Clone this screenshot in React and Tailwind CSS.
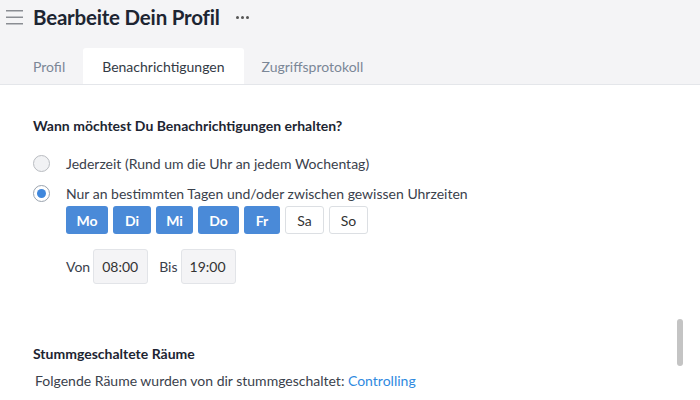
import React from "react";

const days = [
  { l: "Mo", on: true, w: "w-[42px]" },
  { l: "Di", on: true, w: "w-[38px]" },
  { l: "Mi", on: true, w: "w-[37px]" },
  { l: "Do", on: true, w: "w-[41px]" },
  { l: "Fr", on: true, w: "w-[36px]" },
  { l: "Sa", on: false, w: "w-[39px]" },
  { l: "So", on: false, w: "w-[39px]" },
];

export default function App() {
  return (
    <div className="w-[700px] h-[400px] overflow-hidden bg-white font-['Lato',sans-serif] text-[#2b3340] relative">
      <div className="bg-[#f4f4f6] border-b border-[#e4e6ea]">
        <div className="flex items-center h-[34px] pl-[6px]">
          <svg width="17" height="16" viewBox="0 0 17 16" className="mr-[10px]">
            <rect x="0" y="1" width="17" height="1.5" fill="#8a8d93" />
            <rect x="0" y="7.5" width="17" height="1.5" fill="#8a8d93" />
            <rect x="0" y="14" width="17" height="1.5" fill="#8a8d93" />
          </svg>
          <h1 className="text-[20.5px] font-bold text-[#1d2532] tracking-[-0.2px]">Bearbeite Dein Profil</h1>
          <span className="ml-[16px] flex gap-[2px] items-center mt-[1px]">
            <span className="w-[3px] h-[3px] rounded-full bg-[#555]" />
            <span className="w-[3px] h-[3px] rounded-full bg-[#555]" />
            <span className="w-[3px] h-[3px] rounded-full bg-[#555]" />
          </span>
        </div>
        <div className="flex pl-[15px] mt-[14px] h-[36px] text-[14px]">
          <div className="px-[18px] flex items-center text-[#7b8797]">Profil</div>
          <div className="px-[19px] flex items-center bg-white rounded-t-[3px] text-[#333a45]">Benachrichtigungen</div>
          <div className="px-[18px] flex items-center text-[#7b8797]">Zugriffsprotokoll</div>
        </div>
      </div>

      <div className="pl-[33px] pt-[30px] text-[14px]">
        <h2 className="font-bold text-[14px] text-[#1d2532]">Wann möchtest Du Benachrichtigungen erhalten?</h2>
        <div className="mt-[17px] flex items-center h-[20px]">
          <span className="w-[17px] h-[17px] rounded-full border border-[#b9bcc1] bg-[#f1f2f4]" />
          <span className="ml-[16px] text-[#3a414c]">Jederzeit (Rund um die Uhr an jedem Wochentag)</span>
        </div>
        <div className="mt-[10px] flex items-center h-[20px]">
          <span className="w-[17px] h-[17px] rounded-full border border-[#9aa3ae] bg-white flex items-center justify-center">
            <span className="w-[9px] h-[9px] rounded-full bg-[#3f87dc]" />
          </span>
          <span className="ml-[16px] text-[#3a414c]">Nur an bestimmten Tagen und/oder zwischen gewissen Uhrzeiten</span>
        </div>
        <div className="ml-[33px] mt-[3px] flex gap-[5px]">
          {days.map((d) => (
            <div
              key={d.l}
              className={`${d.w} h-[28px] flex items-center justify-center rounded-[3px] text-[14px] ${
                d.on ? "bg-[#4a8ad8] text-white font-bold" : "bg-white border border-[#dcdfe3] text-[#333]"
              }`}
            >
              {d.l}
            </div>
          ))}
        </div>
        <div className="ml-[33px] mt-[15px] flex items-center">
          <span className="text-[#3a414c] mr-[3px]">Von</span>
          <div className="w-[55px] h-[35px] rounded-[3px] border border-[#e2e4e8] bg-[#f4f4f6] flex items-center pl-[8px] text-[#333]">08:00</div>
          <span className="text-[#3a414c] ml-[11px] mr-[3px]">Bis</span>
          <div className="w-[55px] h-[35px] rounded-[3px] border border-[#e2e4e8] bg-[#f4f4f6] flex items-center pl-[8px] text-[#333]">19:00</div>
        </div>

        <h2 className="mt-[59px] font-bold text-[14px] text-[#1d2532]">Stummgeschaltete Räume</h2>
        <p className="mt-[6px] ml-[2px] text-[#3a414c]">
          Folgende Räume wurden von dir stummgeschaltet: <span className="text-[#2f8ae0]">Controlling</span>
        </p>
      </div>

      <div className="absolute left-[677px] top-[319px] w-[6px] h-[47px] rounded-full bg-[#c4c4c4]" />
    </div>
  );
}
